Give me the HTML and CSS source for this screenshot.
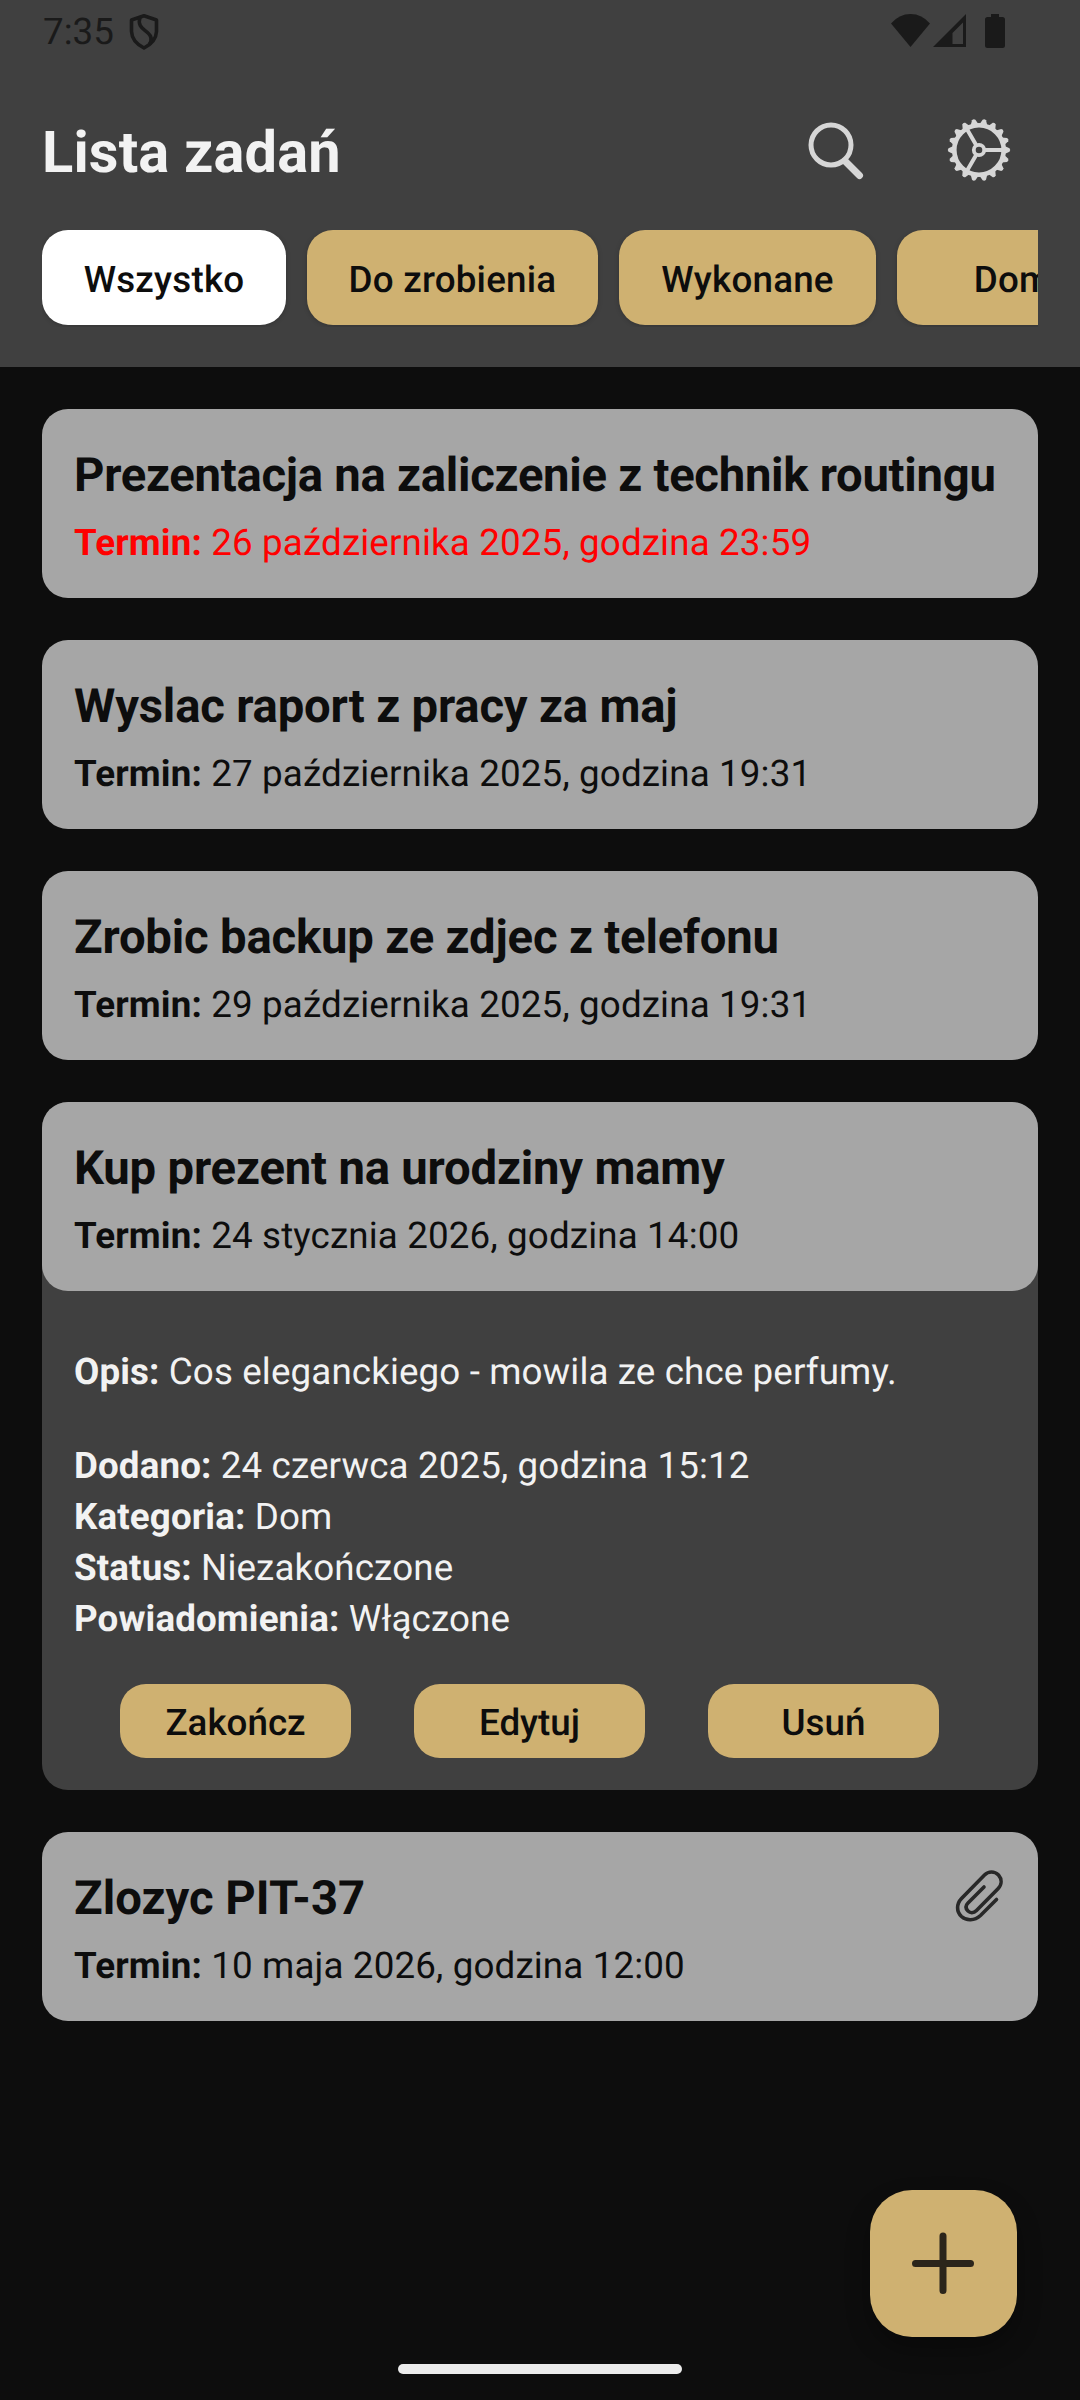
FILE: index.html
```html
<!DOCTYPE html>
<html lang="pl">
<head>
<meta charset="utf-8">
<title>Lista zadań</title>
<link rel="stylesheet" href="styles.css">
</head>
<body>
<div class="app">
  <header class="header">
    <div class="status">
      <span class="clock">7:35</span>
      <svg class="shield" width="30" height="38" viewBox="0 0 30 38" fill="none" stroke="#1a1a1a" stroke-width="3.6" stroke-linejoin="round"><path d="M15 2.8L27.5 7V18.5Q27 29 15 35Q3 29 2.5 18.5V7Z"/><path d="M11 4C8 14 15 16 19 20C23.5 24 22.500 28 20.500 31"/></svg>
      <svg class="signals" width="116" height="38" viewBox="0 0 116 38" fill="#1a1a1a"><path d="M0 10.500Q8 1 19.500 1T39 10.500L19.500 34Z"/><path fill-rule="evenodd" d="M42 34L75 1V34ZM61.500 31H72V9.500L61.500 20Z"/><path d="M100 4V1H108V4H111.500Q114 4 114 6.500V32.500Q114 35 111.500 35H96.500Q94 35 94 32.500V6.500Q94 4 96.500 4Z"/></svg>
    </div>
    <div class="toolbar">
      <h1 class="heading">Lista zadań</h1>
      <svg class="search" width="58" height="60" viewBox="0 0 58 60" fill="none" stroke="#d6d6d6"><circle cx="24" cy="25" r="20" stroke-width="5"/><path d="M38 41L52.500 55.500" stroke-width="7" stroke-linecap="round"/></svg>
      <svg class="gear" width="64" height="64" viewBox="-32 -32 64 64" fill="none" stroke="#d6d6d6">
        <circle r="24.700" stroke-width="4.600"/>
        <circle r="5.200" stroke-width="3.800"/>
        <path stroke-width="4" d="M6 0H24M-3 -5.200L-12 -20.800M-3 5.200L-12 20.800"/>
        <defs><path id="tooth" d="M25.500 -4L30.500 -1.700Q32 0 30.500 1.700L25.500 4Z" fill="#d6d6d6" stroke="none"/></defs>
        <use href="#tooth"/><use href="#tooth" transform="rotate(20)"/><use href="#tooth" transform="rotate(40)"/><use href="#tooth" transform="rotate(60)"/><use href="#tooth" transform="rotate(80)"/><use href="#tooth" transform="rotate(100)"/><use href="#tooth" transform="rotate(120)"/><use href="#tooth" transform="rotate(140)"/><use href="#tooth" transform="rotate(160)"/><use href="#tooth" transform="rotate(180)"/><use href="#tooth" transform="rotate(200)"/><use href="#tooth" transform="rotate(220)"/><use href="#tooth" transform="rotate(240)"/><use href="#tooth" transform="rotate(260)"/><use href="#tooth" transform="rotate(280)"/><use href="#tooth" transform="rotate(300)"/><use href="#tooth" transform="rotate(320)"/><use href="#tooth" transform="rotate(340)"/>
      </svg>
    </div>
    <nav class="chips">
      <div class="chip chip-all">Wszystko</div>
      <div class="chip chip-todo">Do zrobienia</div>
      <div class="chip chip-done">Wykonane</div>
      <div class="chip chip-home">Dom</div>
    </nav>
  </header>
  <main class="list">
    <article class="card"><h2 class="title title-long">Prezentacja na zaliczenie z technik routingu</h2><p class="due late"><b>Termin:</b> 26 października 2025, godzina 23:59</p></article>
    <article class="card"><h2 class="title">Wyslac raport z pracy za maj</h2><p class="due"><b>Termin:</b> 27 października 2025, godzina 19:31</p></article>
    <article class="card"><h2 class="title">Zrobic backup ze zdjec z telefonu</h2><p class="due"><b>Termin:</b> 29 października 2025, godzina 19:31</p></article>
    <section class="expanded">
      <article class="card"><h2 class="title">Kup prezent na urodziny mamy</h2><p class="due"><b>Termin:</b> 24 stycznia 2026, godzina 14:00</p></article>
      <div class="details">
        <p class="line desc"><b>Opis:</b> Cos eleganckiego - mowila ze chce perfumy.</p>
        <p class="line"><b>Dodano:</b> 24 czerwca 2025, godzina 15:12</p>
        <p class="line"><b>Kategoria:</b> Dom</p>
        <p class="line"><b>Status:</b> Niezakończone</p>
        <p class="line"><b>Powiadomienia:</b> Włączone</p>
      </div>
      <div class="actions"><div class="action">Zakończ</div><div class="action">Edytuj</div><div class="action">Usuń</div></div>
    </section>
    <article class="card with-file">
      <div><h2 class="title title-short">Zlozyc PIT-37</h2><p class="due"><b>Termin:</b> 10 maja 2026, godzina 12:00</p></div>
      <svg class="clip" width="52" height="56" viewBox="0 0 52 56" fill="none" stroke="#282828" stroke-width="3.600" stroke-linecap="round"><path d="M41.500 29.500L25.500 45.500C19.500 51 11.500 51 6.500 46.500C1.300 41.500 1.300 34 6.500 28.500L29.500 5C33.500 1 39.500 1 43.500 5C47 9 47 14.500 43 18.700L21.500 40.500C18.500 43.500 15 43 13 41C10.500 38.500 10.500 35.500 13 33L29 17"/></svg>
    </article>
  </main>
  <div class="fab"><svg width="63" height="63" viewBox="0 0 63 63" stroke="#2b251b" stroke-width="7" stroke-linecap="round"><path d="M31 4V58.500M3.500 31.500H58.500"/></svg></div>
  <div class="home-bar"></div>
</div>
</body>
</html>
```
FILE: styles.css
```css
* { box-sizing: border-box; }
body { margin: 0; background: #0d0d0d; }
.app { position: relative; width: 1080px; height: 2400px; overflow: hidden; background: #0d0d0d; color: #0d0d0d; font-family: Roboto, sans-serif; font-size: 36.75px; text-rendering: geometricPrecision; }
h1, h2, p { margin: 0; }
b { font-weight: 700; }
.header { height: 367px; background: #404040; }
.status { display: flex; align-items: flex-start; height: 63px; padding: 0 73px 0 43px; color: #1a1a1a; }
.clock { line-height: 44px; padding-top: 10px; }
.shield { margin: 13px 0 0 15px; }
.signals { margin: 13px 0 0 auto; }
.toolbar { display: flex; align-items: flex-start; height: 167px; padding: 55px 69px 0 42px; }
.heading { flex: 1; color: #f2f2f2; font-size: 57.75px; line-height: 71px; font-weight: 700; letter-spacing: 0.15px; }
.search { margin-right: 82px; margin-top: 2px; }
.gear { margin-top: 0; }
.chips { display: flex; gap: 21px; margin: 0 42px; height: 97px; overflow: hidden; }
.chip { flex: none; height: 95px; border-radius: 26px; background: #cfb171; text-align: center; line-height: 99px; font-weight: 500; letter-spacing: 0.22px; box-shadow: 0 1px 5px rgba(0,0,0,.2); }
.chip-all { width: 244px; background: #fff; }
.chip-todo { width: 291px; }
.chip-done { width: 257px; }
.chip-home { width: 231px; }
.list { display: flex; flex-direction: column; gap: 42px; padding: 42px 42px 0; }
.card { height: 189px; padding: 38px 32px 0; border-radius: 26px; background: #a6a6a6; }
.title { font-size: 47.25px; line-height: 56px; font-weight: 700; letter-spacing: -0.19px; white-space: nowrap; }
.title-long { letter-spacing: -0.285px; }
.title-short { letter-spacing: 0; }
.due { margin-top: 18px; line-height: 44px; letter-spacing: 0.14px; white-space: nowrap; }
.late { color: #f00; }
.expanded { height: 688px; border-radius: 26px; background: #404040; }
.details { padding: 55px 32px 0; color: #f2f2f2; }
.line { line-height: 51px; letter-spacing: 0.12px; }
.desc { margin-bottom: 43px; }
.actions { display: flex; gap: 63px; margin: 40px 0 0 78px; }
.action { width: 231px; height: 74px; border-radius: 26px; background: #cfb171; text-align: center; line-height: 77px; font-weight: 500; }
.with-file { display: flex; justify-content: space-between; }
.clip { margin-right: -1px; }
.fab { position: absolute; left: 870px; top: 2190px; width: 147px; height: 147px; border-radius: 42px; background: #cfb171; display: flex; align-items: center; justify-content: center; box-shadow: 0 12px 24px rgba(0,0,0,.3); }
.home-bar { position: absolute; left: 398px; top: 2364px; width: 284px; height: 10px; border-radius: 5px; background: #ebebeb; }
```
